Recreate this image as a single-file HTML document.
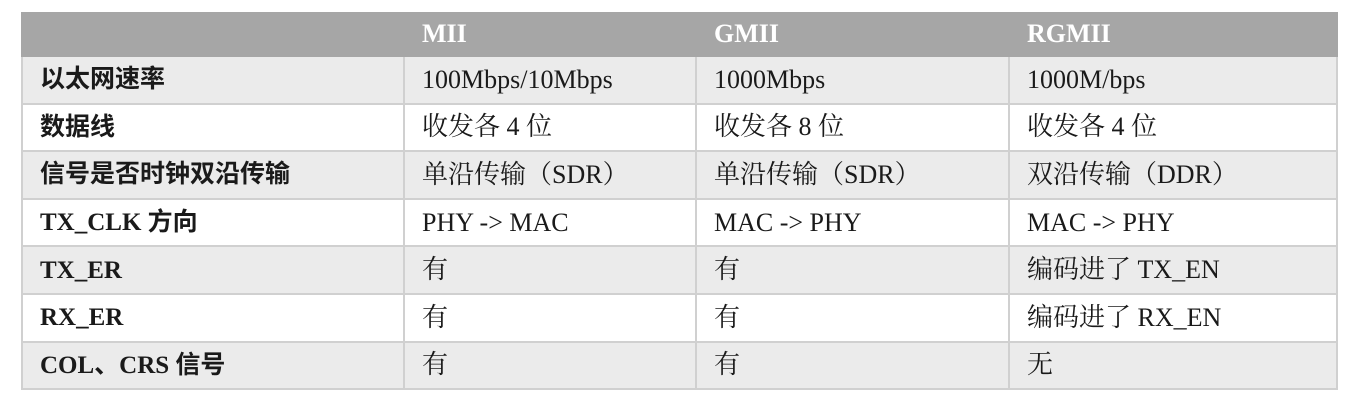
<!DOCTYPE html>
<html><head><meta charset="utf-8"><style>
html,body{margin:0;padding:0;background:#fff;width:1361px;height:406px;overflow:hidden}
table{position:absolute;left:21px;top:12px;border-collapse:collapse;table-layout:fixed;width:1315px}
tr{height:47.6px}
td{border:2px solid #d0d0d0;padding:0 0 0 17px;font-family:"Liberation Serif","Noto Serif CJK SC",serif;font-size:26px;color:#1a1a1a;vertical-align:middle;line-height:1;white-space:nowrap}
tr.h{height:44px}
tr.h td{background:#a6a6a6;color:#fff;font-weight:bold;border-color:#a6a6a6;border-top:none}
tr.g td{background:#ebebeb}
td.c{font-family:"Liberation Serif","Noto Sans CJK SC",sans-serif;font-weight:bold;font-size:25px}
</style></head><body>
<table>
<colgroup><col style="width:382px"><col style="width:292px"><col style="width:313px"><col style="width:328px"></colgroup>
<tr class="h"><td></td><td>MII</td><td>GMII</td><td>RGMII</td></tr>
<tr class="g"><td class="c">以太网速率</td><td>100Mbps/10Mbps</td><td>1000Mbps</td><td>1000M/bps</td></tr>
<tr><td class="c">数据线</td><td>收发各 4 位</td><td>收发各 8 位</td><td>收发各 4 位</td></tr>
<tr class="g"><td class="c">信号是否时钟双沿传输</td><td>单沿传输（SDR）</td><td>单沿传输（SDR）</td><td>双沿传输（DDR）</td></tr>
<tr><td class="c">TX_CLK 方向</td><td>PHY -&gt; MAC</td><td>MAC -&gt; PHY</td><td>MAC -&gt; PHY</td></tr>
<tr class="g"><td class="c">TX_ER</td><td>有</td><td>有</td><td>编码进了 TX_EN</td></tr>
<tr><td class="c">RX_ER</td><td>有</td><td>有</td><td>编码进了 RX_EN</td></tr>
<tr class="g"><td class="c">COL、CRS 信号</td><td>有</td><td>有</td><td>无</td></tr>
</table>
</body></html>
